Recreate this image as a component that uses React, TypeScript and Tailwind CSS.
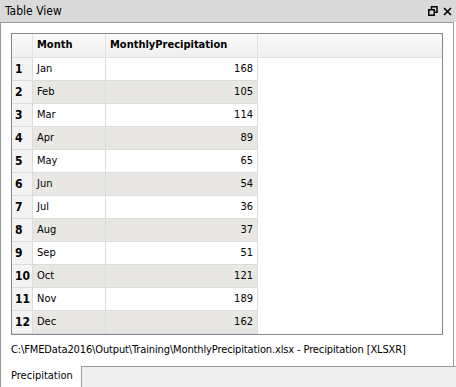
import React from "react";

const rows = [
  ["Jan", 168],
  ["Feb", 105],
  ["Mar", 114],
  ["Apr", 89],
  ["May", 65],
  ["Jun", 54],
  ["Jul", 36],
  ["Aug", 37],
  ["Sep", 51],
  ["Oct", 121],
  ["Nov", 189],
  ["Dec", 162],
] as const;

export default function App() {
  return (
    <div className="w-[456px] h-[387px] bg-white flex flex-col text-[11px] text-black font-['DejaVu_Sans_Condensed','DejaVu_Sans',sans-serif] overflow-hidden">
      {/* title bar */}
      <div className="h-[22px] bg-[#dadada] flex items-center justify-between pl-[5px] pr-[4px] text-[12px]">
        <span>Table View</span>
        <div className="flex items-center gap-[5px]">
          <svg width="10" height="10" viewBox="0 0 10 10" fill="none" stroke="black" strokeWidth="1.5">
            <rect x="3.5" y="0.75" width="5.5" height="5.5" />
            <rect x="0.75" y="3.75" width="5.5" height="5.5" fill="#dadada" />
          </svg>
          <svg width="9" height="9" viewBox="0 0 9 9" stroke="black" strokeWidth="1.6">
            <path d="M1 1 L8 8 M8 1 L1 8" />
          </svg>
        </div>
      </div>

      {/* panel */}
      <div className="h-[344px] w-[454px] border border-[#9a9a9a] border-b-0 flex flex-col pt-[10px] pl-[10px]">
        <div className="w-[432px] h-[302px] border border-[#828790] bg-white flex flex-col">
          <div className="flex h-[24px] bg-gradient-to-b from-[#fafafa] to-[#efefef] border-b border-[#dedede] font-bold">
            <div className="w-[21px] border-r border-[#e2e2e2]" />
            <div className="w-[73px] border-r border-[#e2e2e2] flex items-center pl-[4px]">Month</div>
            <div className="w-[152px] border-r border-[#e2e2e2] flex items-center pl-[4px]">MonthlyPrecipitation</div>
            <div className="flex-1" />
          </div>
          {rows.map(([m, v], i) => (
            <div key={m} className="flex h-[23px]">
              <div className="w-[21px] bg-[#f4f4f4] border-b border-r border-[#dcdcdc] flex items-center pl-[3px] font-bold text-[12px]">
                {i + 1}
              </div>
              <div
                className={`w-[73px] border-b border-r border-[#dcdcdc] flex items-center pl-[4px] ${
                  i % 2 === 1 ? "bg-[#e8e7e3]" : "bg-white"
                }`}
              >
                {m}
              </div>
              <div
                className={`w-[152px] border-b border-r border-[#dcdcdc] flex items-center justify-end pr-[4px] ${
                  i % 2 === 1 ? "bg-[#e8e7e3]" : "bg-white"
                }`}
              >
                {v}
              </div>
            </div>
          ))}
        </div>
        <div className="mt-[7px] h-[16px] flex items-center tracking-[-0.13px]">
          C:\FMEData2016\Output\Training\MonthlyPrecipitation.xlsx - Precipitation [XLSXR]
        </div>
      </div>

      {/* tabs */}
      <div className="flex-1 flex border-t border-[#9a9a9a] bg-[#efefef]">
        <div className="w-[82px] bg-white border-r border-l border-[#9a9a9a] -mt-px flex items-center pl-[10px]">
          Precipitation
        </div>
      </div>
    </div>
  );
}
